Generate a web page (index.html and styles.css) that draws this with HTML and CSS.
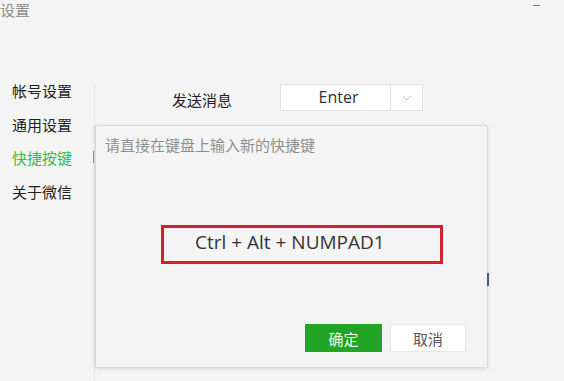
FILE: index.html
```html
<!DOCTYPE html>
<html lang="zh-CN">
<head>
<meta charset="utf-8">
<title>设置</title>
<link rel="stylesheet" href="styles.css">
</head>
<body>
<div class="window">
  <header class="titlebar">
    <span class="title">设置</span>
    <span class="minimize"></span>
  </header>
  <div class="main">
    <nav class="sidebar">
      <div class="nav-item">帐号设置</div>
      <div class="nav-item">通用设置</div>
      <div class="nav-item active">快捷按键</div>
      <div class="nav-item">关于微信</div>
    </nav>
    <section class="content">
      <div class="row">
        <span class="label">发送消息</span>
        <div class="select">
          <span class="select-value">Enter</span>
          <span class="select-arrow">
            <svg width="10" height="6" viewBox="0 0 10 6"><path d="M1 1 L5 5 L9 1" fill="none" stroke="#c4c4c4" stroke-width="1"/></svg>
          </span>
        </div>
      </div>
    </section>
  </div>
  <div class="dialog">
    <p class="prompt">请直接在键盘上输入新的快捷键</p>
    <div class="keys">Ctrl + Alt + NUMPAD1</div>
    <div class="actions">
      <button class="btn btn-primary">确定</button>
      <button class="btn btn-default">取消</button>
    </div>
  </div>
  <span class="edge-mark"></span>
</div>
</body>
</html>
```

FILE: styles.css
```css
* { box-sizing: border-box; }
html, body {
  margin: 0;
  padding: 0;
  background: #f4f4f4;
}
body {
  font-family: "Noto Sans CJK SC", "Noto Sans", sans-serif;
  width: 564px;
  height: 381px;
  overflow: hidden;
}
.window {
  position: relative;
  width: 564px;
  height: 381px;
}
.titlebar {
  display: flex;
  justify-content: space-between;
  align-items: flex-start;
  height: 20px;
}
.title {
  font-size: 15px;
  line-height: 20px;
  color: #8e8e8e;
}
.minimize {
  width: 7px;
  height: 1px;
  background: #777;
  margin: 5px 24px 0 0;
}
.main {
  display: flex;
  margin-top: 54px;
  height: 307px;
}
.sidebar {
  width: 94px;
  padding-left: 12px;
  display: flex;
  flex-direction: column;
}
.nav-item {
  position: relative;
  font-size: 15px;
  line-height: 33.7px;
  color: #1f1f1f;
}
.nav-item.active { color: #3dba46; }
.nav-item.active::after {
  content: "";
  position: absolute;
  right: 0;
  top: 10px;
  width: 1px;
  height: 12px;
  background: #4fc256;
}
.content {
  flex: 1;
  margin-top: 9px;
  border-left: 1px solid #e4e4e4;
  padding: 1px 0 0 77px;
}
.row {
  display: flex;
  align-items: center;
}
.label {
  font-size: 15px;
  color: #1f1f1f;
  width: 108px;
  margin-top: 4px;
}
.select {
  display: flex;
  height: 27px;
}
.select-value {
  width: 111px;
  height: 27px;
  background: #fff;
  border: 1px solid #e2e2e2;
  font-family: "Open Sans", "Noto Sans", sans-serif;
  font-size: 16px;
  line-height: 24px;
  color: #333;
  text-align: center;
  padding-left: 6px;
}
.select-arrow {
  width: 32px;
  height: 27px;
  background: #fff;
  border: 1px solid #e2e2e2;
  border-left: none;
  display: flex;
  align-items: center;
  justify-content: center;
}
.dialog {
  position: absolute;
  left: 95px;
  top: 125px;
  width: 393px;
  height: 243px;
  background: #f4f4f4;
  border: 1px solid #d9d9d9;
  border-radius: 2px;
  box-shadow: 0 1px 4px rgba(0, 0, 0, 0.12);
  display: flex;
  flex-direction: column;
  padding: 9px 21px 15px 9px;
}
.prompt {
  margin: 0;
  font-size: 15px;
  line-height: 19px;
  color: #8f8f8f;
}
.keys {
  margin: 71px 0 0 56px;
  width: 282px;
  height: 39px;
  border: 3px solid #d2202d;
  font-family: "Open Sans", "Noto Sans", sans-serif;
  font-size: 19px;
  line-height: 26px;
  color: #333;
  padding: 1px 0 0 31px;
}
.actions {
  margin-top: auto;
  display: flex;
  justify-content: flex-end;
  gap: 8px;
}
.btn {
  height: 28px;
  font-family: "Noto Sans CJK SC", sans-serif;
  font-size: 15px;
  border-radius: 0;
  padding: 0;
  cursor: pointer;
}
.btn-primary {
  width: 77px;
  background: #22a527;
  border: 1px solid #22a527;
  color: #eef8ee;
}
.btn-default {
  width: 76px;
  background: #fff;
  border: 1px solid #e6e6e6;
  color: #555;
}
.edge-mark {
  position: absolute;
  left: 487px;
  top: 273px;
  width: 2px;
  height: 13px;
  background: #4d5c72;
}
```
